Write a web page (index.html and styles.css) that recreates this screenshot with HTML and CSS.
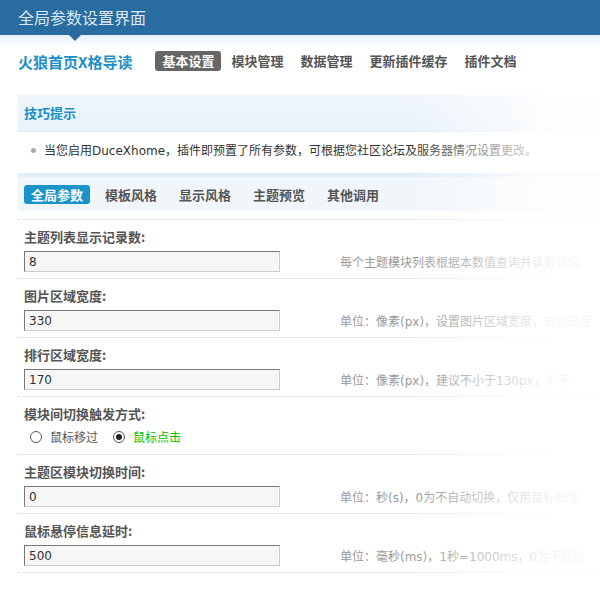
FILE: index.html
```html
<!DOCTYPE html>
<html lang="zh-CN">
<head>
	<meta charset="UTF-8">
	<title>全局参数设置界面</title>
	<link rel="stylesheet" href="styles.css">
</head>
<body>
	<div class="topbar">
		<h1>全局参数设置界面</h1>
	</div>
	<div class="nav">
		<span class="brand">火狼首页X格导读</span>
		<a class="on" href="#">基本设置</a>
		<a href="#">模块管理</a>
		<a href="#">数据管理</a>
		<a href="#">更新插件缓存</a>
		<a href="#">插件文档</a>
	</div>
	<div class="main">
		<div class="tips">
			<h3>技巧提示</h3>
			<ul>
				<li>当您启用DuceXhome，插件即预置了所有参数，可根据您社区论坛及服务器情况设置更改。</li>
			</ul>
		</div>
		<div class="tabs">
			<a class="on" href="#">全局参数</a>
			<a href="#">模板风格</a>
			<a href="#">显示风格</a>
			<a href="#">主题预览</a>
			<a href="#">其他调用</a>
		</div>
		<div class="form">
			<div class="row">
				<label>主题列表显示记录数:</label>
				<div class="field">
					<input class="txt" type="text" value="8">
					<span class="hint">每个主题模块列表根据本数值查询并读取论坛</span>
				</div>
			</div>
			<div class="row">
				<label>图片区域宽度:</label>
				<div class="field">
					<input class="txt" type="text" value="330">
					<span class="hint">单位：像素(px)，设置图片区域宽度，自动高度</span>
				</div>
			</div>
			<div class="row">
				<label>排行区域宽度:</label>
				<div class="field">
					<input class="txt" type="text" value="170">
					<span class="hint">单位：像素(px)，建议不小于130px，小于</span>
				</div>
			</div>
			<div class="row">
				<label>模块间切换触发方式:</label>
				<div class="radios">
					<span class="radio"><i></i>鼠标移过</span>
					<span class="radio checked"><i></i>鼠标点击</span>
				</div>
			</div>
			<div class="row">
				<label>主题区模块切换时间:</label>
				<div class="field">
					<input class="txt" type="text" value="0">
					<span class="hint">单位：秒(s)，0为不自动切换，仅用鼠标触发</span>
				</div>
			</div>
			<div class="row">
				<label>鼠标悬停信息延时:</label>
				<div class="field">
					<input class="txt" type="text" value="500">
					<span class="hint">单位：毫秒(ms)，1秒=1000ms，0为不延时</span>
				</div>
			</div>
		</div>
	</div>
	<div class="fade"></div>
</body>
</html>
```

FILE: styles.css
```css
html, body {
	margin: 0;
	padding: 0;
	overflow: hidden;
}
body {
	position: relative;
	height: 600px;
	background: #fff;
	font-family: "DejaVu Sans", "Noto Sans CJK SC", sans-serif;
	font-size: 12px;
	color: #333;
}
a {
	text-decoration: none;
}

/* header */
.topbar {
	height: 35px;
	background: #286ca0;
}
.topbar h1 {
	position: relative;
	margin: 0;
	padding-left: 18px;
	line-height: 35px;
	font-size: 16px;
	font-weight: normal;
	color: #dde8f2;
	font-family: "Noto Sans CJK SC", sans-serif;
}
.topbar h1::after {
	position: absolute;
	left: 69px;
	top: 35px;
	content: "";
	border-left: 6px solid transparent;
	border-right: 6px solid transparent;
	border-top: 6px solid #286ca0;
}

/* top nav */
.nav {
	display: flex;
	align-items: center;
	gap: 3px;
	height: 52px;
	padding-left: 18px;
	background: linear-gradient(#e8f1fa, #fff 12px);
	font-family: "Noto Sans CJK SC", sans-serif;
}
.nav .brand {
	margin-right: 20px;
	font-size: 15px;
	font-weight: bold;
	color: #1a8fc9;
}
.nav a {
	padding: 0 7px;
	line-height: 20px;
	font-size: 13px;
	font-weight: bold;
	color: #555;
	border-radius: 3px;
}
.nav a.on {
	background: #666;
	color: #fff;
}

.main {
	margin-top: 8px;
	padding-left: 18px;
}

/* tips */
.tips h3 {
	margin: 0;
	height: 36px;
	line-height: 36px;
	padding-left: 6px;
	font-size: 13px;
	color: #1a8fc9;
	font-family: "Noto Sans CJK SC", sans-serif;
	background: linear-gradient(#f0f6fc, #e9f2fa);
	border-bottom: 1px dotted #d3e2ef;
}
.tips ul {
	margin: 0;
	padding: 10px 0 13px 26px;
	list-style: none;
}
.tips li {
	position: relative;
	line-height: 18px;
	white-space: nowrap;
}
.tips li::before {
	position: absolute;
	left: -13px;
	top: 6px;
	width: 5px;
	height: 5px;
	border-radius: 50%;
	background: #aaa;
	content: "";
}

/* tabs */
.tabs {
	display: flex;
	align-items: center;
	gap: 8px;
	height: 34px;
	padding-left: 6px;
	border-top: 4px solid #e1eef9;
	background: #f1f6fb;
	font-family: "Noto Sans CJK SC", sans-serif;
}
.tabs a {
	padding: 0 7px;
	line-height: 19px;
	font-size: 13px;
	font-weight: bold;
	color: #555;
	border-radius: 3px;
}
.tabs a.on {
	background: #1a93c9;
	color: #fff;
}

/* form rows */
.form {
	margin-top: 8px;
	border-top: 1px dotted #cfe0ea;
}
.row {
	padding: 8px 0 6px 6px;
	border-bottom: 1px dotted #cfe0ea;
}
.row label {
	display: block;
	height: 18px;
	line-height: 18px;
	margin-bottom: 5px;
	font-size: 13px;
	font-weight: bold;
	color: #555;
	font-family: "Noto Sans CJK SC", sans-serif;
}
.field {
	display: flex;
	align-items: center;
	white-space: nowrap;
}
.txt {
	flex-shrink: 0;
	box-sizing: border-box;
	width: 256px;
	height: 21px;
	margin: 0;
	padding: 0 4px;
	border: 1px solid #ccc;
	border-top-color: #777;
	border-left-color: #777;
	background: #f6f6f6;
	font-family: "DejaVu Sans", sans-serif;
	font-size: 12px;
	color: #333;
}
.hint {
	margin-left: 60px;
	color: #999;
}

/* radios */
.radios {
	display: flex;
	align-items: flex-start;
	gap: 15px;
	height: 20px;
	line-height: 18px;
	padding-left: 6px;
	font-family: "Noto Sans CJK SC", sans-serif;
	font-size: 12px;
	color: #555;
}
.radio {
	display: flex;
	align-items: center;
}
.radio i {
	position: relative;
	box-sizing: border-box;
	width: 12px;
	height: 12px;
	margin-right: 8px;
	border: 1px solid #555;
	border-radius: 50%;
	background: #fff;
}
.radio.checked {
	color: #00c000;
}
.radio.checked i::after {
	position: absolute;
	left: 2px;
	top: 2px;
	width: 6px;
	height: 6px;
	border-radius: 50%;
	background: #222;
	content: "";
}

/* right side fade-out */
.fade {
	position: absolute;
	top: 88px;
	right: 0;
	bottom: 0;
	width: 190px;
	background: linear-gradient(to right, rgba(255,255,255,0), rgba(255,255,255,0.9) 75%);
	pointer-events: none;
}
```
